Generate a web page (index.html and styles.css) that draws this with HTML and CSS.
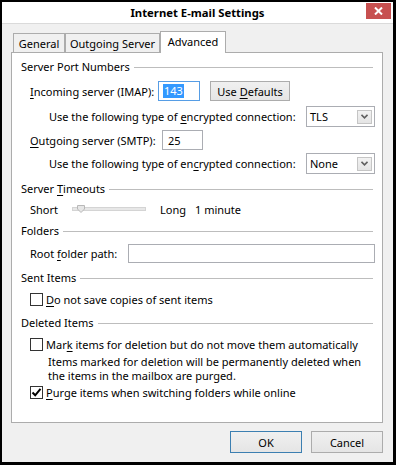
FILE: index.html
```html
<!DOCTYPE html>
<html>
<head>
<meta charset="utf-8">
<link rel="stylesheet" href="styles.css">
</head>
<body>
<div class="window">
  <div class="titlebar">
    <span></span>
    <div class="title">Internet E-mail Settings</div>
    <div class="close">
      <svg width="9" height="8" viewBox="0 0 9 8"><path d="M1 0.5 L8 7.5 M8 0.5 L1 7.5" stroke="#fff" stroke-width="2"/></svg>
    </div>
  </div>
  <div class="tabs">
    <div class="tab t-general">General</div>
    <div class="tab t-outgoing">Outgoing Server</div>
    <div class="tab t-advanced">Advanced</div>
  </div>
  <div class="panel">
    <div class="h"><span>Server Port Numbers</span></div>
    <div class="row r-incoming">
      <span class="lbl-in"><u>I</u>ncoming server (IMAP):</span>
      <div class="input focus in-small"><span class="sel">143</span></div>
      <div class="btn b-defaults"><span>Use <u>D</u>efaults</span></div>
    </div>
    <div class="row r-enc">
      <span>Use the following type of <u>e</u>ncrypted connection:</span>
      <div class="select"><span>TLS</span><div class="arrow"><svg width="7" height="5" viewBox="0 0 7 5"><path d="M0.5 0.8 L3.5 3.8 L6.5 0.8" fill="none" stroke="#606060" stroke-width="1.6"/></svg></div></div>
    </div>
    <div class="row r-outgoing">
      <span class="lbl-out"><u>O</u>utgoing server (SMTP):</span>
      <div class="input in-small2">25</div>
    </div>
    <div class="row r-enc r-enc2">
      <span>Use the following type of en<u>c</u>rypted connection:</span>
      <div class="select"><span>None</span><div class="arrow"><svg width="7" height="5" viewBox="0 0 7 5"><path d="M0.5 0.8 L3.5 3.8 L6.5 0.8" fill="none" stroke="#606060" stroke-width="1.6"/></svg></div></div>
    </div>
    <div class="h h-timeouts"><span>Server <u>T</u>imeouts</span></div>
    <div class="row r-slider">
      <span class="lbl-short">Short</span>
      <svg class="slider" width="74" height="10" viewBox="0 0 74 10">
        <rect x="0.5" y="3.5" width="73" height="3" fill="#e7e7e7" stroke="#d4d4d4"/>
        <path d="M5.5 1.5 L12.5 1.5 L12.5 5 L9 8.5 L5.5 5 Z" fill="#e6e6e6" stroke="#b8b8b8"/>
      </svg>
      <span class="lbl-long">Long</span>
      <span>1 minute</span>
    </div>
    <div class="h h-folders"><span>Folders</span></div>
    <div class="row r-root">
      <span class="lbl-root">Root <u>f</u>older path:</span>
      <div class="input in-wide"></div>
    </div>
    <div class="h h-sent"><span>Sent Items</span></div>
    <div class="row r-cb r-cb1">
      <div class="cb"></div>
      <span class="cb-lbl"><u>D</u>o not save copies of sent items</span>
    </div>
    <div class="h h-deleted"><span>Deleted Items</span></div>
    <div class="row r-cb r-cb2">
      <div class="cb"></div>
      <span class="cb-lbl">Mar<u>k</u> items for deletion but do not move them automatically</span>
    </div>
    <div class="note">
      <div class="note-line">Items marked for deletion will be permanently deleted when</div>
      <div class="note-line">the items in the mailbox are purged.</div>
    </div>
    <div class="row r-cb r-cb3">
      <div class="cb"><svg width="11" height="11" viewBox="0 0 11 11"><path d="M1.5 5.5 L4.2 8.3 L9.5 1.8" fill="none" stroke="#000" stroke-width="2"/></svg></div>
      <span class="cb-lbl"><u>P</u>urge items when switching folders while online</span>
    </div>
  </div>
  <div class="buttons">
    <div class="btn b-dialog b-ok">OK</div>
    <div class="btn b-dialog">Cancel</div>
  </div>
</div>
</body>
</html>
```

FILE: styles.css
```css
* { box-sizing: border-box; }
body {
  margin: 0;
  font-family: "Noto Sans", "DejaVu Sans", sans-serif;
  font-size: 11px;
  color: #000;
  background: #f0f0f0;
}
u { text-decoration: underline; text-underline-offset: 2px; }
.window {
  width: 396px;
  height: 465px;
  border-style: solid;
  border-color: #000;
  border-width: 2px 3px 3px 2px;
  background: #f0f0f0;
  display: flex;
  flex-direction: column;
}
.titlebar {
  height: 22px;
  flex: none;
  background: #ffffff;
  border-bottom: 1px solid #dadada;
  display: grid;
  grid-template-columns: 1fr auto 1fr;
}
.title {
  font-weight: bold;
  font-size: 11.3px;
  line-height: 21px;
  color: #000;
}
.close {
  justify-self: end;
  width: 25px;
  height: 16px;
  margin: 1px 2px 0 0;
  background: #c75050;
  display: flex;
  align-items: center;
  justify-content: center;
}
.close svg { display: block; }

.tabs {
  display: flex;
  align-items: flex-end;
  height: 22px;
  flex: none;
  margin: 7px 0 -1px 11px;
}
.tab {
  height: 20px;
  border: 1px solid #acacac;
  border-bottom: none;
  background: #f0f0f0;
  display: flex;
  align-items: center;
  justify-content: center;
  white-space: nowrap;
}
.t-general { width: 52px; }
.t-outgoing { width: 95px; }
.t-advanced {
  width: 66px;
  height: 22px;
  background: #fff;
  position: relative;
  z-index: 1;
  padding-bottom: 3px;
}

.panel {
  flex: none;
  height: 371px;
  margin: 0 10px 0 9px;
  border: 1px solid #acacac;
  background: #fff;
  padding: 6px 7px 0 9px;
  display: flex;
  flex-direction: column;
}
.h {
  display: flex;
  align-items: center;
  height: 16px;
  line-height: 16px;
  white-space: nowrap;
}
.h::after {
  content: "";
  flex: 1;
  height: 1px;
  background: #bdbdbd;
  margin: 1px 2px 0 4px;
}
.h-timeouts { margin-top: 7px; }
.h-folders { margin-top: 6px; }
.h-sent { margin-top: 7px; }
.h-deleted { margin-top: 8px; }

.row {
  display: flex;
  align-items: center;
  white-space: nowrap;
  padding-left: 9px;
}
.r-incoming { margin-top: 6px; height: 20px; }
.r-enc { margin-top: 5px; height: 21px; padding-left: 28px; }
.r-enc2 { margin-top: 3px; }
.r-outgoing { margin-top: 3px; height: 20px; }
.r-slider { margin-top: 4px; height: 16px; }
.r-root { margin-top: 5px; height: 19px; }
.r-cb { height: 16px; }
.r-cb1 { margin-top: 5px; }
.r-cb2 { margin-top: 5px; }
.r-cb3 { margin-top: 1px; }

.lbl-in { width: 128px; }
.lbl-out { width: 132px; }
.lbl-short { width: 42px; }
.lbl-long { margin-left: 14px; width: 35px; }
.lbl-root { width: 98px; }
.slider { display: block; }

.input {
  height: 20px;
  border: 1px solid #abadb3;
  background: #fff;
  display: flex;
  align-items: center;
  padding-left: 5px;
}
.input.focus { border-color: #569de5; padding-left: 4px; }
.in-small { width: 42px; }
.in-small2 { width: 41px; }
.in-wide { flex: 1; height: 19px; }
.sel {
  background: #3399ff;
  color: #fff;
  line-height: 14px;
  padding: 0 1px;
}

.btn {
  height: 20px;
  border: 1px solid #acacac;
  background: linear-gradient(#f0f0f0, #e5e5e5);
  display: flex;
  align-items: center;
  justify-content: center;
  white-space: nowrap;
}
.b-defaults { width: 80px; margin-left: 10px; }

.select {
  margin-left: auto;
  width: 69px;
  height: 21px;
  border: 1px solid #abadb3;
  background: #fff;
  display: flex;
  align-items: center;
  padding: 0 2px 0 3px;
}
.select span { flex: 1; }
.arrow {
  width: 15px;
  height: 14px;
  border: 1px solid #c5c5c5;
  background: linear-gradient(#f2f2f2, #e4e4e4);
  display: flex;
  align-items: center;
  justify-content: center;
}
.arrow svg { display: block; }

.cb {
  width: 13px;
  height: 13px;
  border: 1px solid #333;
  background: #fff;
  display: flex;
  align-items: center;
  justify-content: center;
  flex: none;
}
.cb svg { display: block; }
.cb-lbl { margin-left: 3px; }

.note {
  margin-top: 3px;
  padding-left: 27px;
  white-space: nowrap;
}
.note-line {
  height: 14px;
  line-height: 14px;
}

.buttons {
  display: flex;
  justify-content: flex-end;
  gap: 9px;
  margin-top: 8px;
  padding-right: 10px;
}
.b-dialog { width: 72px; height: 22px; }
.b-ok { border-color: #3c7fb1; }
```
